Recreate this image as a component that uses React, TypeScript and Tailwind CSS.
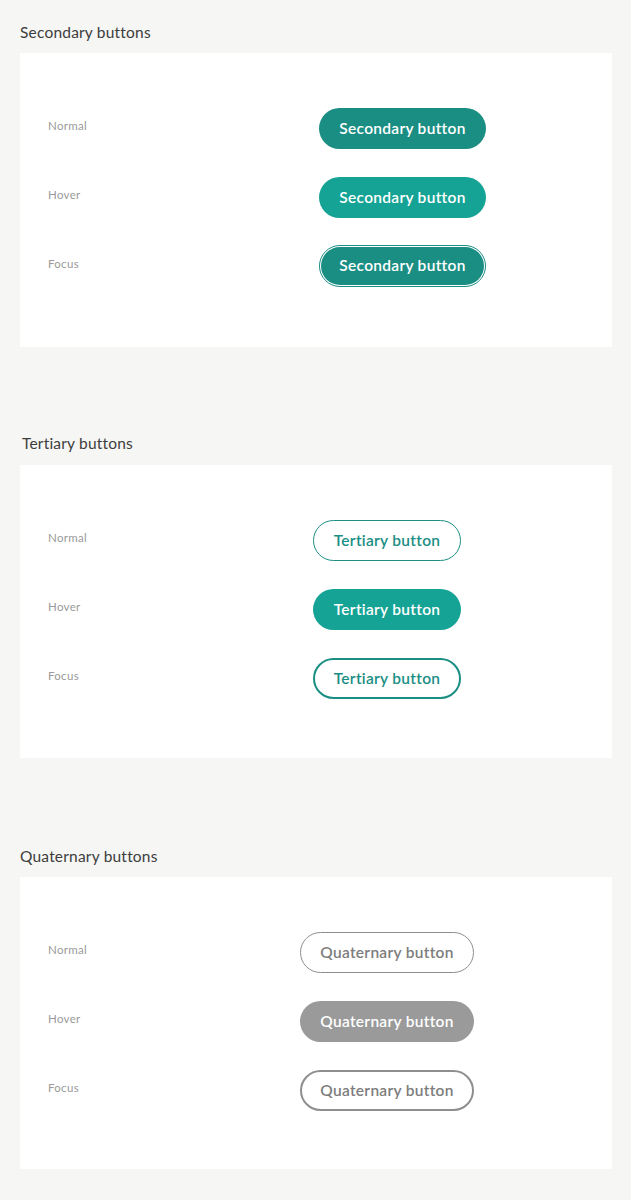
const font = { fontFamily: "Lato, 'Noto Sans', sans-serif" };

type Row = { label: string; cls: string; ring?: string };

function Section({ title, titleCls, offset, width, text, rows, cardCls }: {
  title: string;
  titleCls: string;
  offset: string;
  width: string;
  text: string;
  rows: Row[];
  cardCls: string;
}) {
  return (
    <div>
      <div className={`text-[15.5px] leading-5 tracking-[0.2px] text-[#3d3d3d] ${titleCls}`}>{title}</div>
      <div className={`bg-white ml-5 mr-[19px] pl-7 pt-[55px] flex flex-col gap-[28px] ${cardCls}`}>
        {rows.map((r) => (
          <div key={r.label} className="flex items-start">
            <div className={`${offset} shrink-0 text-[11.5px] tracking-[0.3px] text-[#9a9a9a] pt-[9px]`}>{r.label}</div>
            {r.ring ? (
              <div className={`rounded-full border p-px -mt-px ${r.ring}`}>
                <div className={`h-[38px] rounded-full flex items-center justify-center text-[15.5px] tracking-[0.3px] font-semibold ${r.cls}`}>
                  {text}
                </div>
              </div>
            ) : (
              <div className={`${width} h-[41px] rounded-full flex items-center justify-center text-[15.5px] tracking-[0.3px] font-semibold ${r.cls}`}>
                {text}
              </div>
            )}
          </div>
        ))}
      </div>
    </div>
  );
}

export default function App() {
  return (
    <div className="w-[631px] h-[1200px] bg-[#f6f6f4] pt-[22px]" style={font}>
      <Section
        title="Secondary buttons"
        titleCls="pl-5 mb-[11px]"
        offset="w-[271px]"
        width="w-[167px]"
        text="Secondary button"
        cardCls="h-[294px]"
        rows={[
          { label: "Normal", cls: "bg-[#1b8e84] text-white" },
          { label: "Hover", cls: "bg-[#14a394] text-white" },
          { label: "Focus", cls: "w-[163px] bg-[#1b8e84] text-white", ring: "border-[#1b8e84]" },
        ]}
      />
      <div className="h-[86px]" />
      <Section
        title="Tertiary buttons"
        titleCls="pl-[22px] mb-[12px]"
        offset="w-[265px]"
        width="w-[148px]"
        text="Tertiary button"
        cardCls="h-[293px]"
        rows={[
          { label: "Normal", cls: "border border-[#1b8e84] text-[#1b8e84] bg-white" },
          { label: "Hover", cls: "bg-[#14a394] text-white" },
          { label: "Focus", cls: "border-2 border-[#1b8e84] text-[#1b8e84] bg-white" },
        ]}
      />
      <div className="h-[88px]" />
      <Section
        title="Quaternary buttons"
        titleCls="pl-5 mb-[11px]"
        offset="w-[252px]"
        width="w-[174px]"
        text="Quaternary button"
        cardCls="h-[292px]"
        rows={[
          { label: "Normal", cls: "border border-[#8e8e8e] text-[#7d7d7d] bg-white" },
          { label: "Hover", cls: "bg-[#9a9a9a] text-white" },
          { label: "Focus", cls: "border-2 border-[#8e8e8e] text-[#7d7d7d] bg-white" },
        ]}
      />
    </div>
  );
}
